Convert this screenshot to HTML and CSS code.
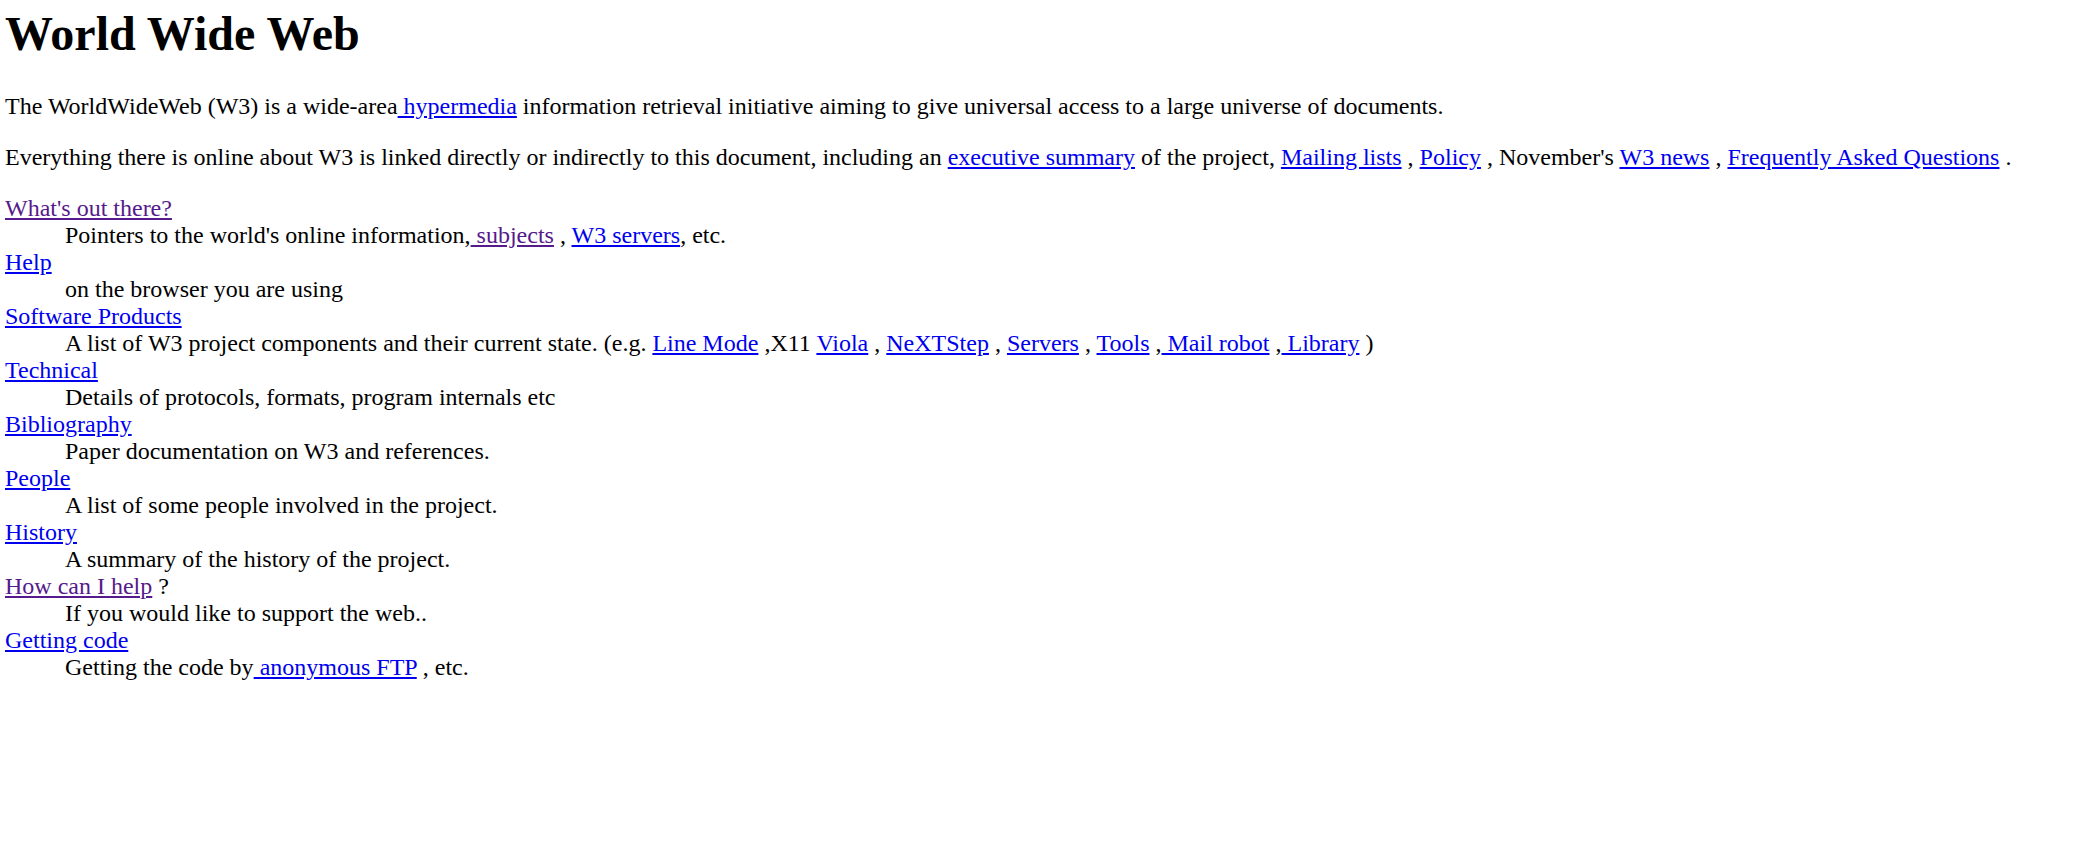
FILE: index.html
```html
<!DOCTYPE html>
<html lang="en">
<head>
    <meta charset="UTF-8">
    <title>The World Wide Web project</title>
    <link rel="stylesheet" href="styles.css">
</head>
<body>
    <h1>World Wide Web</h1>
    <p class="intro">The WorldWideWeb (W3) is a wide-area<a href="#"> hypermedia</a> information retrieval initiative aiming to give universal access to a large universe of documents.</p>
    <p>Everything there is online about W3 is linked directly or indirectly to this document, including an <a href="#">executive summary</a> of the project, <a href="#">Mailing lists</a> , <a href="#">Policy</a> , November's <a href="#">W3 news</a> , <a href="#">Frequently Asked Questions</a> .</p>
    <dl>
        <dt><a href="#" class="visited">What's out there?</a></dt>
        <dd>Pointers to the world's online information,<a href="#" class="visited"> subjects</a> , <a href="#">W3 servers</a>, etc.</dd>
        <dt><a href="#">Help</a></dt>
        <dd>on the browser you are using</dd>
        <dt><a href="#">Software Products</a></dt>
        <dd>A list of W3 project components and their current state. (e.g. <a href="#">Line Mode</a> ,X11 <a href="#">Viola</a> , <a href="#">NeXTStep</a> , <a href="#">Servers</a> , <a href="#">Tools</a> ,<a href="#"> Mail robot</a> ,<a href="#"> Library</a> )</dd>
        <dt><a href="#">Technical</a></dt>
        <dd>Details of protocols, formats, program internals etc</dd>
        <dt><a href="#">Bibliography</a></dt>
        <dd>Paper documentation on W3 and references.</dd>
        <dt><a href="#">People</a></dt>
        <dd>A list of some people involved in the project.</dd>
        <dt><a href="#">History</a></dt>
        <dd>A summary of the history of the project.</dd>
        <dt><a href="#" class="visited">How can I help</a> ?</dt>
        <dd>If you would like to support the web..</dd>
        <dt><a href="#">Getting code</a></dt>
        <dd>Getting the code by<a href="#"> anonymous FTP</a> , etc.</dd>
    </dl>
</body>
</html>
```

FILE: styles.css
```css
body {
    font-family: "Liberation Serif", "Times New Roman", serif;
    font-size: 24px;
    color: #000;
    background: #fff;
    margin: 0 5px;
}

h1 {
    font-size: 48px;
    font-weight: bold;
    margin: 6px 0 32px;
}

p {
    margin: 24px 0;
}

.intro {
    margin-top: 0;
}

a {
    color: #0000ee;
}

a.visited {
    color: #551a8b;
}

dl {
    margin: 24px 0;
}

dd {
    margin-left: 60px;
}
```
